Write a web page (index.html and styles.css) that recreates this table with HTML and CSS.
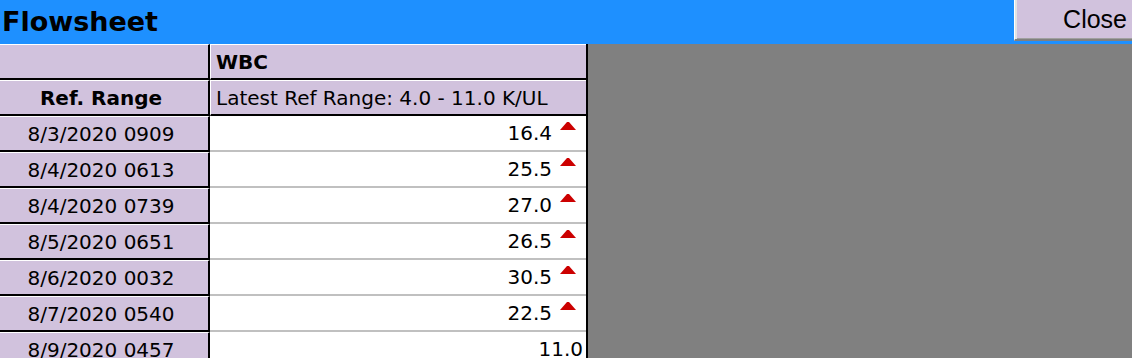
FILE: index.html
```html
<!DOCTYPE html>
<html>
<head>
<meta charset="utf-8">
<link rel="stylesheet" href="styles.css">
</head>
<body>
<div class="titlebar">
  <div class="title">Flowsheet</div>
  <div class="close-btn">Close</div>
</div>
<div class="sheet">
  <div class="cell hdr-left"></div>
  <div class="cell hdr-right bold">WBC</div>
  <div class="cell hdr-left bold center">Ref. Range</div>
  <div class="cell hdr-right">Latest Ref Range: 4.0 - 11.0 K/UL</div>

  <div class="cell date">8/3/2020 0909</div>
  <div class="cell val"><span>16.4</span><span class="flag"><svg width="16" height="8" viewBox="0 0 16 8"><polygon points="7,0 9,0 16,8 0,8" fill="#cc0000"/></svg></span></div>

  <div class="cell date">8/4/2020 0613</div>
  <div class="cell val"><span>25.5</span><span class="flag"><svg width="16" height="8" viewBox="0 0 16 8"><polygon points="7,0 9,0 16,8 0,8" fill="#cc0000"/></svg></span></div>

  <div class="cell date">8/4/2020 0739</div>
  <div class="cell val"><span>27.0</span><span class="flag"><svg width="16" height="8" viewBox="0 0 16 8"><polygon points="7,0 9,0 16,8 0,8" fill="#cc0000"/></svg></span></div>

  <div class="cell date">8/5/2020 0651</div>
  <div class="cell val"><span>26.5</span><span class="flag"><svg width="16" height="8" viewBox="0 0 16 8"><polygon points="7,0 9,0 16,8 0,8" fill="#cc0000"/></svg></span></div>

  <div class="cell date">8/6/2020 0032</div>
  <div class="cell val"><span>30.5</span><span class="flag"><svg width="16" height="8" viewBox="0 0 16 8"><polygon points="7,0 9,0 16,8 0,8" fill="#cc0000"/></svg></span></div>

  <div class="cell date">8/7/2020 0540</div>
  <div class="cell val"><span>22.5</span><span class="flag"><svg width="16" height="8" viewBox="0 0 16 8"><polygon points="7,0 9,0 16,8 0,8" fill="#cc0000"/></svg></span></div>

  <div class="cell date">8/9/2020 0457</div>
  <div class="cell val noflag"><span>11.0</span></div>
</div>
</body>
</html>
```
FILE: styles.css
```css
html, body {
  margin: 0;
  padding: 0;
  background: #808080;
  overflow: hidden;
}
body {
  width: 1132px;
  height: 358px;
  font-family: "DejaVu Sans", sans-serif;
  font-size: 20px;
  color: #000;
}
.titlebar {
  height: 44px;
  background: #1e90ff;
  display: flex;
  justify-content: space-between;
  align-items: flex-start;
  overflow: hidden;
}
.title {
  font-family: "DejaVu Sans", sans-serif;
  font-weight: bold;
  font-size: 27px;
  line-height: 44px;
  padding-left: 2px;
}
.close-btn {
  box-sizing: border-box;
  width: 118px;
  height: 41px;
  background: #d1c2dd;
  border-left: 1px solid #ffffff;
  box-shadow: inset 2px 0 0 #e3e3e3, inset 0 -1px 0 #a0a0a0;
  border-bottom: 2px solid #808080;
  font-family: "Liberation Sans", Arial, sans-serif;
  font-size: 25px;
  line-height: 38px;
  text-align: right;
  padding-right: 5px;
}
.sheet {
  display: grid;
  grid-template-columns: 210px 376px;
  grid-auto-rows: 36px;
  width: 588px;
  box-sizing: border-box;
  border-right: 2px solid #000;
}
.cell {
  box-sizing: border-box;
  display: flex;
  align-items: center;
  white-space: nowrap;
}
.bold {
  font-weight: bold;
}
.center {
  justify-content: center;
  padding-right: 6px;
}
.hdr-left, .date {
  background: #d1c2dd;
  border-top: 1px solid #ffffff;
  border-bottom: 2px solid #000;
  border-right: 2px solid #000;
}
.date {
  justify-content: center;
  padding-right: 6px;
}
.hdr-right {
  background: #d1c2dd;
  border-top: 1px solid #ffffff;
  border-left: 1px solid #ffffff;
  border-bottom: 2px solid #000;
  padding-left: 5px;
}
.val {
  background: #ffffff;
  border-bottom: 2px solid #c0c0c0;
  justify-content: flex-end;
}
.flag {
  width: 34px;
  align-self: flex-start;
  padding-top: 6px;
  padding-left: 8px;
  box-sizing: border-box;
}
.flag svg {
  display: block;
}
.noflag {
  padding-right: 3px;
}
```
